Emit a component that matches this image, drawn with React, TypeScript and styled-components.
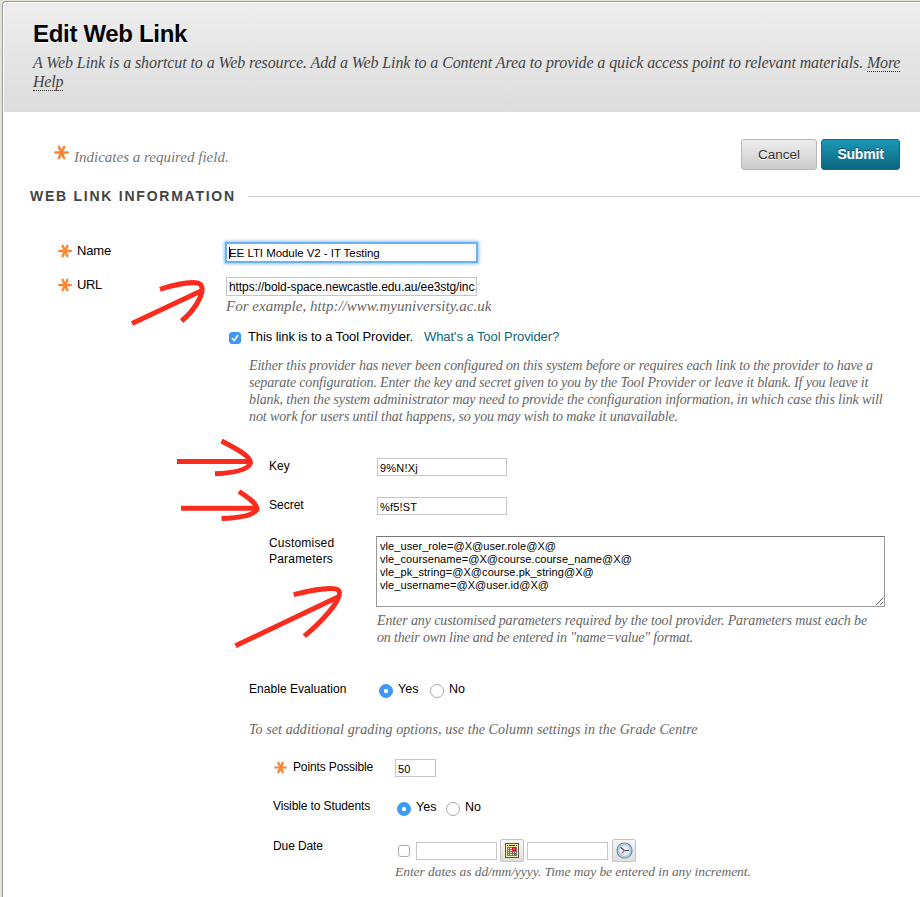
import React from "react";
import styled, { createGlobalStyle, css } from "styled-components";

const sans = '"Liberation Sans", Arial, sans-serif';
const serif = 'Georgia, "Liberation Serif", serif';

const GlobalStyle = createGlobalStyle`
  *, *::before, *::after { box-sizing: border-box; }
  html { overflow: hidden; }
  body { margin: 0; background: #e6e2d8; font-family: ${sans}; color: #000; }
  p, h1, h2 { margin: 0; }
`;

const Page = styled.div`
  position: relative;
  height: 897px;
  padding: 1px 0 0 2px;
  overflow: hidden;
`;

const Frame = styled.main`
  height: 910px;
  padding: 1px 0 0 1px;
  background: #fff;
  border: solid #999;
  border-width: 1px 0 0 1px;
  border-top-left-radius: 4px;
`;

const Header = styled.header`
  height: 109px;
  padding: 15px 0 0 29px;
  background: linear-gradient(#eee, #dcdcdc);
  border-top-left-radius: 3px;
`;

const Title = styled.h1`
  font-size: 24px;
  line-height: 32px;
  letter-spacing: -0.32px;
  text-shadow: 0 1px 0 #fff;
`;

const Intro = styled.p`
  margin-top: 3px;
  font: italic 16px/19px ${serif};
  color: #444;
  white-space: nowrap;
`;

const Line = styled.span<{ $track?: number }>`
  display: block;
  white-space: nowrap;
  letter-spacing: ${(p) => p.$track ?? 0}px;
`;

const HelpLink = styled.a`
  display: inline-block;
  height: 19px;
  line-height: 19px;
  letter-spacing: -0.2px;
  border-bottom: 1px dotted #333;
  vertical-align: top;
`;

const ActionBar = styled.div`
  display: flex;
  align-items: flex-start;
  height: 75px;
  padding: 27px 20px 0 50px;
`;

const RequiredNote = styled.p`
  flex: 1;
  display: flex;
  gap: 5px;
  padding-top: 5px;
  font: italic 15px/26px ${serif};
  color: #777;
`;

const Button = styled.button<{ $primary?: boolean }>`
  height: 31px;
  width: 76px;
  margin: 0 4px 0 0;
  padding: 0;
  font: 13.5px/29px ${sans};
  color: #333;
  border: 1px solid #b8b8b8;
  border-radius: 3px;
  background: linear-gradient(#eee, #cbcbcb);
  text-shadow: 0 1px 0 #fff;
  ${(p) =>
    p.$primary &&
    css`
      width: 79px;
      margin: 0;
      font-size: 14px;
      font-weight: bold;
      letter-spacing: -0.2px;
      color: #fff;
      border-color: #0d6e88;
      background: linear-gradient(#1a98b6, #0c6680);
      text-shadow: 0 -1px 0 #07485b;
    `}
`;

const SectionHeading = styled.h2`
  display: flex;
  align-items: center;
  gap: 12px;
  height: 18px;
  padding-left: 26px;
  font-size: 14px;
  line-height: 18px;
  letter-spacing: 1.75px;
  color: #444;
  &::after {
    content: "";
    flex: 1;
    height: 1px;
    background: #c9c9c9;
  }
`;

const Form = styled.form`
  padding-top: 38px;
`;

/* A labelled line: $left is the indent, $label the width of the label column. */
const Row = styled.div<{ $left: number; $label: number; $h: number }>`
  display: grid;
  grid-template-columns: ${(p) => p.$label}px 1fr;
  height: ${(p) => p.$h}px;
  padding-left: ${(p) => p.$left}px;
`;

const Label = styled.label<{ $large?: boolean; $track?: number }>`
  display: flex;
  gap: ${(p) => (p.$large ? 5 : 6)}px;
  font-size: ${(p) => (p.$large ? 13 : 12)}px;
  line-height: 16px;
  letter-spacing: ${(p) => p.$track ?? 0}px;
`;

const Stack = styled.div`
  line-height: 15.5px;
`;

const Field = styled.div`
  position: relative;
`;

const TextInput = styled.input<{ $w: number; $h?: number; $size?: number; $track?: number; $focus?: boolean }>`
  display: block;
  width: ${(p) => p.$w}px;
  height: ${(p) => p.$h ?? 18}px;
  margin: 0;
  padding: 1px 1px 0 2px;
  font: ${(p) => p.$size ?? 11}px ${sans};
  letter-spacing: ${(p) => p.$track ?? 0}px;
  color: #000;
  background: #fff;
  border: 1px solid #c6c6c6;
  border-radius: 0;
  outline: none;
  ${(p) =>
    p.$focus &&
    css`
      border-color: #6fb0f0;
      box-shadow: 0 0 0 1px #6cb0f5, 0 0 3px 2px #8cc2f8;
    `}
`;

const Caret = styled.span`
  position: absolute;
  left: 3px;
  top: 4px;
  width: 1px;
  height: 12px;
  background: #000;
`;

const Hint = styled.div<{ $top?: number; $bottom?: number; $size?: number; $left?: number }>`
  padding: ${(p) => p.$top ?? 0}px 0 ${(p) => p.$bottom ?? 0}px ${(p) => p.$left ?? 0}px;
  font: italic ${(p) => p.$size ?? 14}px/17px ${serif};
  color: #666;
`;

const ProviderRow = styled.div`
  display: flex;
  height: 28px;
  padding: 0 0 0 225px;
  font-size: 13px;
  line-height: 16px;
  letter-spacing: -0.1px;
  white-space: nowrap;
`;

const Checkbox = styled.span<{ $on?: boolean }>`
  display: flex;
  flex: none;
  width: 12px;
  height: 12px;
  border-radius: 3px;
  border: 1px solid ${(p) => (p.$on ? "#3a94f6" : "#aaa")};
  background: ${(p) => (p.$on ? "#3d99fb" : "#fff")};
`;

const ProviderCheck = styled.div`
  width: 19px;
  padding-top: 3px;
`;

const ToolLink = styled.a`
  margin-left: 11px;
  color: #0f6579;
  letter-spacing: -0.06px;
`;

const Area = styled.textarea`
  display: block;
  width: 509px;
  height: 71px;
  margin: 0 0 0 -1px;
  padding: 3px 3px;
  font: 11px/13px ${sans};
  letter-spacing: 0.07px;
  color: #000;
  border: 1px solid #999;
  border-top-color: #777;
  border-radius: 0;
  resize: both;
  outline: none;
  overflow: hidden;
`;

const Choices = styled.div<{ $left?: number; $top?: number }>`
  display: flex;
  padding: ${(p) => p.$top ?? 3}px 0 0 ${(p) => p.$left ?? 0}px;
  font-size: 12.5px;
  line-height: 14px;
`;

const Radio = styled.span<{ $on?: boolean }>`
  flex: none;
  width: 14px;
  height: 14px;
  margin-right: 5px;
  border-radius: 50%;
  border: 1px solid #a9a9a9;
  background: #fff;
  ${(p) =>
    p.$on &&
    css`
      border-color: #3a94f6;
      background: radial-gradient(circle, #fff 0 1.8px, #3d99fb 2.5px);
    `}
`;

const Option = styled.span<{ $w?: number }>`
  width: ${(p) => p.$w ?? 30}px;
  margin-top: -2px;
`;

const DateLine = styled.div`
  display: flex;
  align-items: center;
  height: 24px;
  padding: 1px 0 0 3px;
`;

const DateInput = styled(TextInput)<{ $gap: number }>`
  margin-left: ${(p) => p.$gap}px;
`;

const IconButton = styled.button<{ $gap: number }>`
  display: flex;
  align-items: center;
  justify-content: center;
  width: 24px;
  height: 23px;
  margin: 0 0 0 ${(p) => p.$gap}px;
  padding: 0;
  border: 1px solid #c4c4c4;
  border-radius: 2px;
  background: linear-gradient(#f6f6f6, #dedede);
`;

const Annotations = styled.svg`
  position: absolute;
  left: 0;
  top: 0;
  pointer-events: none;
`;

const StarSvg = styled.svg<{ $top?: number }>`
  flex: none;
  margin-top: ${(p) => p.$top ?? 0}px;
`;

function Star({ size = 14, top = 0 }: { size?: number; top?: number }) {
  return (
    <StarSvg width={size} height={size} viewBox="0 0 14 14" $top={top}>
      <path
        d="M1.300 7H12.700M4.600 1.800L9.400 12.200M9.400 1.800L4.600 12.200"
        stroke="#fd8433"
        strokeWidth="2.4"
        strokeLinecap="round"
      />
    </StarSvg>
  );
}

function CalendarIcon() {
  return (
    <svg width="14" height="15" viewBox="0 0 14 15">
      <rect x="0.5" y="0.5" width="13" height="14" fill="#fdf3a8" stroke="#5c5647" />
      <path d="M2 2.500h1M4 2.500h6M11 2.500h1" stroke="#443d25" />
      <rect x="2" y="4" width="10" height="9" fill="#77766f" />
      <path
        d="M3 5h1v1H3zM5 5h2v1H5zM3 7h1v1H3zM5 7h2v1H5zM3 9h1v1H3zM5 9h2v1H5zM8 9h1v1H8zM10 9h1v1H10zM3 11h1v1H3zM5 11h2v1H5zM8 11h1v1H8z"
        fill="#e4e1d0"
      />
      <rect x="7.75" y="4.75" width="2.5" height="2.500" fill="#fff" stroke="#d9122b" strokeWidth="1.500" />
    </svg>
  );
}

function ClockIcon() {
  return (
    <svg width="17" height="17" viewBox="0 0 17 17">
      <circle cx="8.5" cy="8.5" r="7.5" fill="#e7f1fa" stroke="#71879d" strokeWidth="1.2" />
      <circle cx="8.5" cy="8.5" r="6" fill="none" stroke="#a5c3de" strokeWidth="1.5" />
      <path d="M8.5 8.5L4.500 5.300M8.500 8.500H13" stroke="#415166" strokeWidth="1.100" />
      <path d="M8.500 8.500L5.600 11.600" stroke="#e0524a" strokeWidth="1.100" />
    </svg>
  );
}

function Arrows() {
  return (
    <Annotations width="920" height="897" fill="none" stroke="#fb2b1d" strokeWidth="5">
      <path d="M132 323.500L202 290.500M160 289.300C177 284 197 280 201 285C206 293 193 312 181.500 321" />
      <path d="M177 461.500H251M221.500 441C237 449 250.500 456 250.500 463C248 470 233 473 215 473.800" />
      <path d="M181 508.300H257M239 491.500C249 498 257.500 504 257 509.500C253 516 238 518 221.500 518.500" />
      <path d="M235.500 645.800L340 596M293.700 594.700C312 590 335 586 339 591C343 600 319 624 304.300 636.200" />
    </Annotations>
  );
}

const parameters = [
  "vle_user_role=@X@user.role@X@",
  "vle_coursename=@X@course.course_name@X@",
  "vle_pk_string=@X@course.pk_string@X@",
  "vle_username=@X@user.id@X@",
].join("\n");

export default function App() {
  return (
    <Page>
      <GlobalStyle />
      <Frame>
        <Header>
          <Title>Edit Web Link</Title>
          <Intro>
            <Line $track={-0.1}>
              A Web Link is a shortcut to a Web resource. Add a Web Link to a Content Area to provide a quick access
              point to relevant materials. <HelpLink>More</HelpLink>
            </Line>
            <HelpLink>Help</HelpLink>
          </Intro>
        </Header>
        <ActionBar>
          <RequiredNote>
            <Star size={15} top={1} />
            Indicates a required field.
          </RequiredNote>
          <Button type="button">Cancel</Button>
          <Button type="button" $primary>
            Submit
          </Button>
        </ActionBar>
        <SectionHeading>WEB LINK INFORMATION</SectionHeading>
        <Form>
          <Row $left={54} $label={168} $h={34}>
            <Label $large $track={-0.15}>
              <Star top={1} />
              Name
            </Label>
            <Field>
              <TextInput $w={251} $h={19} $size={11.5} $track={-0.05} $focus defaultValue="EE LTI Module V2 - IT Testing" />
              <Caret />
            </Field>
          </Row>
          <Row $left={54} $label={168} $h={52}>
            <Label $large $track={-0.4}>
              <Star top={1} />
              URL
            </Label>
            <Field>
              <TextInput
                $w={251}
                $h={19}
                $size={12}
                $track={-0.09}
                defaultValue="https://bold-space.newcastle.edu.au/ee3stg/inc"
              />
              <Hint $top={2} $size={15}>
                <Line $track={0.02}>For example, http://www.myuniversity.ac.uk</Line>
              </Hint>
            </Field>
          </Row>
          <ProviderRow>
            <ProviderCheck>
              <Checkbox $on>
                <svg width="10" height="10" viewBox="0 0 10 10" fill="none" stroke="#fff" strokeWidth="1.6">
                  <path d="M2 5.300L4.200 7.600L8 2" />
                </svg>
              </Checkbox>
            </ProviderCheck>
            This link is to a Tool Provider.
            <ToolLink>What's a Tool Provider?</ToolLink>
          </ProviderRow>
          <Hint $left={245} $bottom={33}>
            <Line $track={-0.16}>
              Either this provider has never been configured on this system before or requires each link to the provider
              to have a
            </Line>
            <Line $track={-0.16}>
              separate configuration. Enter the key and secret given to you by the Tool Provider or leave it blank. If
              you leave it
            </Line>
            <Line $track={-0.115}>
              blank, then the system administrator may need to provide the configuration information, in which case this
              link will
            </Line>
            <Line $track={-0.114}>
              not work for users until that happens, so you may wish to make it unavailable.
            </Line>
          </Hint>
          <Row $left={265} $label={108} $h={39}>
            <Label>Key</Label>
            <TextInput $w={130} $track={0.2} defaultValue="9%N!Xj" />
          </Row>
          <Row $left={265} $label={108} $h={39}>
            <Label>Secret</Label>
            <TextInput $w={130} $track={0.2} defaultValue="%f5!ST" />
          </Row>
          <Row $left={265} $label={108} $h={145}>
            <Label $track={0.2}>
              <Stack>
                Customised
                <br />
                Parameters
              </Stack>
            </Label>
            <Field>
              <Area defaultValue={parameters} />
              <Hint $top={5}>
                <Line $track={-0.112}>
                  Enter any customised parameters required by the tool provider. Parameters must each be
                </Line>
                <Line $track={-0.17}>on their own line and be entered in "name=value" format.</Line>
              </Hint>
            </Field>
          </Row>
          <Row $left={245} $label={130} $h={40}>
            <Label $track={0.04}>Enable Evaluation</Label>
            <Choices>
              <Radio $on />
              <Option $w={32}>Yes</Option>
              <Radio />
              <Option>No</Option>
            </Choices>
          </Row>
          <Hint $left={245} $bottom={21}>
            <Line $track={0.085}>To set additional grading options, use the Column settings in the Grade Centre</Line>
          </Hint>
          <Row $left={270} $label={121} $h={39}>
            <Label $track={-0.13}>
              <Star size={13} top={2} />
              Points Possible
            </Label>
            <TextInput $w={41} $track={0.1} defaultValue="50" />
          </Row>
          <Row $left={269} $label={122} $h={40}>
            <Label $track={-0.11}>Visible to Students</Label>
            <Choices $left={2} $top={4}>
              <Radio $on />
              <Option>Yes</Option>
              <Radio />
              <Option>No</Option>
            </Choices>
          </Row>
          <Row $left={269} $label={122} $h={60}>
            <Label $track={-0.1}>Due Date</Label>
            <Field>
              <DateLine>
                <Checkbox />
                <DateInput $gap={6} $w={81} />
                <IconButton type="button" $gap={3} aria-label="Choose date">
                  <CalendarIcon />
                </IconButton>
                <DateInput $gap={3} $w={81} />
                <IconButton type="button" $gap={4} aria-label="Choose time">
                  <ClockIcon />
                </IconButton>
              </DateLine>
              <Hint $top={1} $size={13.5}>
                <Line $track={-0.06}>Enter dates as dd/mm/yyyy. Time may be entered in any increment.</Line>
              </Hint>
            </Field>
          </Row>
        </Form>
      </Frame>
      <Arrows />
    </Page>
  );
}
